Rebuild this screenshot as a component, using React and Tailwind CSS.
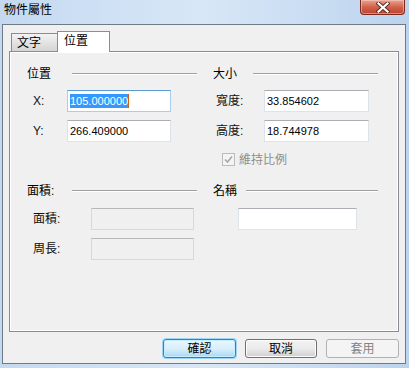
import React from 'react';

const cjk = "font-['Liberation_Sans','Noto_Sans_CJK_TC',sans-serif]";

// group title with etched line running to the column edge
const GroupTitle = ({ text, lineStart }) => (
  <div className="flex items-center h-[14px]">
    <div className="shrink-0 text-[12px] leading-[14px] text-black" style={{ width: lineStart }}>
      {text}
    </div>
    <div className="flex-1 h-[2px] border-t border-[#a0a0a0] border-b border-b-white mt-[-1px]" />
  </div>
);

const TextBox = ({ w, value, focused, disabled }) => {
  const base = 'h-[22px] border flex items-center pl-[2px] text-[11px] leading-[14px] text-black';
  const look = focused
    ? 'bg-white border-[#a9cdeb] border-t-[#5b9bd4]'
    : disabled
    ? 'bg-[#f0f0f0] border-[#d9d9d9] border-t-[#b8b8b8]'
    : 'bg-white border-[#dde3ea] border-t-[#abadb3]';
  return (
    <div className={`${base} ${look} ${w}`}>
      {focused ? (
        <span className="flex items-center">
          <span className="bg-[#3399ff] text-white leading-[14px]">{value}</span>
          <span className="w-px h-[14px] bg-[#d06010]" />
        </span>
      ) : (
        value
      )}
    </div>
  );
};

const Row = ({ indent, labelW, label, children }) => (
  <div className="flex items-center h-[22px]" style={{ paddingLeft: indent }}>
    <div className="shrink-0 text-[12px] leading-[14px] text-[#111111]" style={{ width: labelW }}>
      {label}
    </div>
    {children}
  </div>
);

const CloseButton = () => (
  <div className="w-[45px] h-[15px] rounded-b-[4px] border border-t-0 border-[#7a2a1e] bg-gradient-to-b from-[#e8a493] via-[#d0624c] to-[#c1402a] flex items-center justify-center shadow-[inset_0_0_0_1px_rgba(255,210,200,0.5)]">
    <svg width="14" height="11" viewBox="0 0 14 11">
      <path d="M2.5 1.5 L11.5 9.5 M11.5 1.5 L2.5 9.5" stroke="#5a2a22" strokeWidth="4" strokeLinecap="square" />
      <path d="M2.5 1.5 L11.5 9.5 M11.5 1.5 L2.5 9.5" stroke="#ffffff" strokeWidth="2.2" strokeLinecap="square" />
    </svg>
  </div>
);

const DlgButton = ({ children, kind, w }) => {
  const look =
    kind === 'default'
      ? 'border-[#3c7fb1] bg-gradient-to-b from-[#eaf6fd] via-[#d9f0fc] to-[#a7d9f5] text-black shadow-[0_0_0_1px_#9fd5f4,inset_0_0_0_1px_#c8ecff]'
      : kind === 'disabled'
      ? 'border-[#adb2b5] bg-[#f4f4f4] text-[#838383]'
      : 'border-[#707070] bg-gradient-to-b from-[#f2f2f2] via-[#ebebeb] to-[#cfcfcf] text-black shadow-[inset_0_0_0_1px_#fcfcfc]';
  return (
    <div className={`${w} h-[19px] rounded-[3px] border flex items-center justify-center text-[12px] leading-[14px] ${look}`}>
      {children}
    </div>
  );
};

export default function App() {
  return (
    <div className={`w-[409px] h-[368px] overflow-hidden flex flex-col bg-gradient-to-r from-[#c4d9f0] via-[#d8e7f7] to-[#bcd3ee] ${cjk}`}>
      {/* title bar */}
      <div className="h-[24px] flex items-start justify-between shrink-0">
        <div className="pl-[4px] pt-[3px] text-[12px] leading-[14px] text-black">物件屬性</div>
        <div className="mr-[4px]">
          <CloseButton />
        </div>
      </div>

      {/* client area */}
      <div className="ml-[2px] w-[404px] h-[340px] border border-[#6f7a87] bg-[#f0f0f0] flex flex-col pl-[6px] pt-[6px] shrink-0">
        {/* tabs */}
        <div className="flex items-end h-[20px] pl-[2px] relative z-10">
          <div className="w-[47px] h-[18px] border border-b-0 border-[#898c95] bg-gradient-to-b from-[#f3f3f3] to-[#d4d4d4] text-[12px] leading-[14px] text-black pl-[5px] pt-[2px]">
            文字
          </div>
          <div className="-ml-px -mb-px w-[53px] h-[21px] border border-b-0 border-[#898c95] bg-white text-[12px] leading-[14px] text-black pl-[6px] pt-[2px]">
            位置
          </div>
        </div>

        {/* tab page */}
        <div className="w-[390px] h-[281px] border border-[#898c95] bg-[#f0f0f0] shadow-[inset_1px_1px_0_#ffffff,inset_-1px_-1px_0_#ffffff] pl-[17px] pt-[15px]">
          <div className="flex gap-[16px]">
            <div className="w-[170px] flex flex-col">
              <GroupTitle text="位置" lineStart={45} />
              <div className="mt-[9px]">
                <Row indent={6} labelW={34} label="X:">
                  <TextBox w="w-[104px]" value="105.000000" focused />
                </Row>
              </div>
              <div className="mt-[8px]">
                <Row indent={6} labelW={34} label="Y:">
                  <TextBox w="w-[104px]" value="266.409000" />
                </Row>
              </div>
            </div>
            <div className="w-[165px] flex flex-col">
              <GroupTitle text="大小" lineStart={40} />
              <div className="mt-[9px]">
                <Row indent={3} labelW={48} label="寬度:">
                  <TextBox w="w-[105px]" value="33.854602" />
                </Row>
              </div>
              <div className="mt-[8px]">
                <Row indent={3} labelW={48} label="高度:">
                  <TextBox w="w-[105px]" value="18.744978" />
                </Row>
              </div>
              <div className="mt-[11px] h-[13px] flex items-center pl-[9px]">
                <div className="w-[13px] h-[13px] border border-[#bcbcbc] bg-[#f4f4f4] flex items-center justify-center">
                  <svg width="9" height="9" viewBox="0 0 9 9">
                    <path d="M1 4.5 L3.5 7 L8 1.5" fill="none" stroke="#a8a8a8" strokeWidth="1.6" />
                  </svg>
                </div>
                <div className="ml-[4px] text-[12px] leading-[14px] text-[#8d8d8d]">維持比例</div>
              </div>
            </div>
          </div>

          <div className="flex gap-[16px] mt-[18px]">
            <div className="w-[170px] flex flex-col">
              <GroupTitle text="面積:" lineStart={45} />
              <div className="mt-[10px]">
                <Row indent={6} labelW={58} label="面積:">
                  <TextBox w="w-[103px]" value="" disabled />
                </Row>
              </div>
              <div className="mt-[8px]">
                <Row indent={6} labelW={58} label="周長:">
                  <TextBox w="w-[103px]" value="" disabled />
                </Row>
              </div>
            </div>
            <div className="w-[165px] flex flex-col">
              <GroupTitle text="名稱" lineStart={33} />
              <div className="mt-[10px] pl-[25px]">
                <TextBox w="w-[119px]" value="" />
              </div>
            </div>
          </div>
        </div>

        {/* buttons */}
        <div className="flex justify-end pr-[6px] mt-[7px] gap-[9px]">
          <DlgButton kind="default" w="w-[73px]">確認</DlgButton>
          <DlgButton w="w-[72px]">取消</DlgButton>
          <DlgButton kind="disabled" w="w-[73px]">套用</DlgButton>
        </div>
      </div>
    </div>
  );
}
